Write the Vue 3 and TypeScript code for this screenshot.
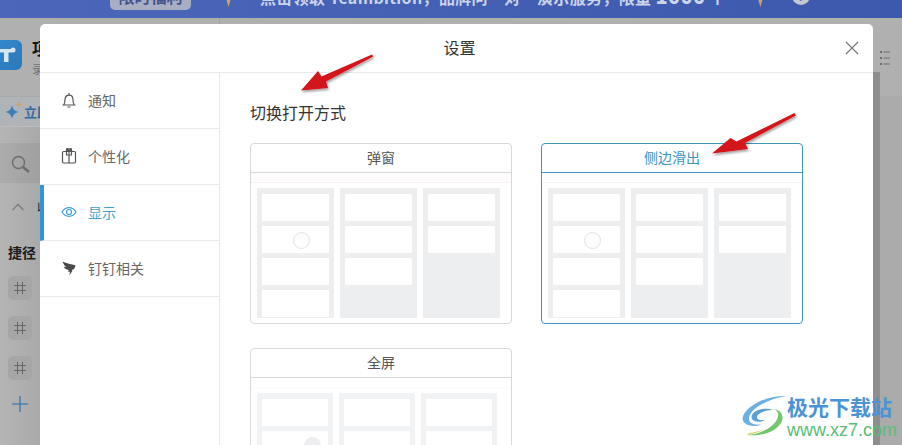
<script setup lang="ts">
const menu = [
  { key: 'bell', label: '通知', active: false },
  { key: 'gift', label: '个性化', active: false },
  { key: 'eye', label: '显示', active: true },
  { key: 'ding', label: '钉钉相关', active: false },
]
const cards = [
  { title: '弹窗', active: false, faded: false },
  { title: '侧边滑出', active: true, faded: false },
  { title: '全屏', active: false, faded: true },
]
const columns = [4, 3, 2]
const shortcuts = [1, 2, 3]
</script>

<template>
  <div class="page">
    <div class="topbar">
      <span class="promo-btn">限时福利</span>
      <span class="drop"></span>
      <span class="promo-text">点击领取 Teambition，品牌问一对一演示服务，限量 <b>1000</b> 个</span>
      <span class="drop drop-2"></span>
      <span class="help">?</span>
    </div>
    <div class="under">
      <aside class="side">
        <div class="project">
          <div class="logo">
            <svg width="22" height="30" viewBox="0 0 22 30">
              <path d="M0 9h12v3.500H8.500V22H4v-9.500H0z" fill="#d8e6f2"/>
              <circle cx="13" cy="10" r="2.500" fill="#d8e6f2"/>
            </svg>
          </div>
          <div class="project-text"><strong>项目</strong><small>录</small></div>
        </div>
        <div class="now">
          <svg width="20" height="24" viewBox="0 0 20 24">
            <path d="M8 5c.8 4 2.500 6 6.500 7-4 1-5.700 3-6.500 7-.8-4-2.500-6-6.500-7 4-1 5.700-3 6.500-7z" fill="#3a7fbc"/>
            <path d="M15 1c.4 2 1.200 3 3.200 3.500-2 .5-2.800 1.500-3.200 3.500-.4-2-1.200-3-3.200-3.500 2-.5 2.800-1.500 3.200-3.500z" fill="#c9a860"/>
          </svg>
          <span>立即</span>
        </div>
        <div class="search">
          <svg width="20" height="20" viewBox="0 0 20 20" fill="none" stroke="#6c6c6c" stroke-width="1.400">
            <circle cx="7.500" cy="7.500" r="6"/>
            <path d="M12 12l6 5" stroke-width="2.600"/>
          </svg>
        </div>
        <div class="collapse">
          <svg width="14" height="10" viewBox="0 0 14 10" fill="none" stroke="#7c7c7c" stroke-width="1.300"><path d="M1.500 8L7 2.500 12.500 8"/></svg>
          <span>收起</span>
        </div>
        <div class="shortcut">捷径</div>
        <div v-for="s in shortcuts" :key="s" class="hash">
          <svg width="14" height="14" viewBox="0 0 14 14" fill="none" stroke="#6a6a6a" stroke-width="1.100"><path d="M4.500 1v12M9.500 1v12M1 4.500h12M1 9.500h12"/></svg>
        </div>
        <div class="plus">
          <svg width="16" height="16" viewBox="0 0 16 16" fill="none" stroke="#4d7db0" stroke-width="1.600"><path d="M8 0v16M0 8h16"/></svg>
        </div>
      </aside>
      <div class="rest">
        <div class="rest-head">
          <svg class="list-icon" width="10" height="16" viewBox="0 0 10 16" fill="none" stroke="#6c6c6c" stroke-width="1.200">
            <path d="M3.500 2H10M3.500 8H10M3.500 14H10"/>
            <path d="M0 2h2M0 8h2M0 14h2" stroke-width="2"/>
          </svg>
        </div>
      </div>
    </div>

    <section class="modal">
      <header class="modal-head">
        <span>设置</span>
        <svg class="close" width="14" height="14" viewBox="0 0 14 14" fill="none" stroke="#7a7a7a" stroke-width="1.200"><path d="M1 1l12 12M13 1L1 13"/></svg>
      </header>
      <div class="modal-body">
        <nav class="nav">
          <div v-for="m in menu" :key="m.key" class="nav-item" :class="{ on: m.active }">
            <svg v-if="m.key === 'bell'" width="16" height="16" viewBox="0 0 16 16" fill="none" stroke="#555" stroke-width="1.200"><path d="M2.500 13h11c-1-1-1.500-2.300-1.500-5 0-2.800-1.600-4.800-4-4.800S4 5.200 4 8c0 2.700-.5 4-1.500 5zM8 3V1M6.500 15h3"/></svg>
            <svg v-else-if="m.key === 'gift'" width="16" height="17" viewBox="0 0 16 17" fill="none" stroke="#555" stroke-width="1.200"><rect x="1.500" y="4.500" width="13" height="11.500" rx="1.200"/><path d="M8 4.500V16M5.500 4.500v3.500h5V4.500"/><path d="M4.500 4.500L5.500 1h2l.5 2 .5-2h2l1 3.500z" fill="#555" stroke="none"/></svg>
            <svg v-else-if="m.key === 'eye'" width="16" height="16" viewBox="0 0 16 16" fill="none" stroke="#3f9fcb" stroke-width="1.200"><path d="M1 8c1.800-2.900 4-4.300 7-4.300S13.200 5.100 15 8c-1.800 2.900-4 4.300-7 4.300S2.800 10.900 1 8z"/><circle cx="8" cy="8" r="2.500"/></svg>
            <svg v-else width="16" height="16" viewBox="0 0 16 16" fill="#4a4a4a"><path d="M1.500 1.500c4 1.800 8.500 3 13 3.800-.3 1.800-1 3.200-2 4.300l-1.800.2.800 1-3.200 4.700.7-3.800H7l.8-1.700C5 9.500 3.300 8.200 2.800 6.700l2.400.3C3.500 5.800 2.200 3.700 1.500 1.500z"/></svg>
            <span>{{ m.label }}</span>
          </div>
        </nav>
        <main class="content">
          <h2>切换打开方式</h2>
          <div class="cards">
            <div v-for="c in cards" :key="c.title" class="card" :class="{ active: c.active, faded: c.faded }">
              <div class="card-title">{{ c.title }}</div>
              <div class="strip"></div>
              <div class="preview">
                <div v-for="(n, i) in columns" :key="i" class="col">
                  <div v-for="k in n" :key="k" class="tile">
                    <i v-if="i === 0 && k === 2" class="dot"></i>
                  </div>
                </div>
              </div>
            </div>
          </div>
        </main>
      </div>
    </section>
    <div class="scroll-edge"></div>

    <svg class="arrows" width="902" height="445" viewBox="0 0 902 445">
      <defs>
        <filter id="sh" x="-30%" y="-30%" width="160%" height="160%"><feDropShadow dx="1" dy="2" stdDeviation="1.300" flood-color="#000" flood-opacity=".35"/></filter>
      </defs>
      <g fill="#d3131a" filter="url(#sh)">
        <path d="M372 54.500l1.300 2L326 81.500l2 6.500-27 2.500 17-19.500 3.500 5.500z"/>
        <path d="M794.500 113l1.500 2.500-51 27.500 3 6-36 4.500 18.500-15.500 6 3.500z"/>
      </g>
    </svg>

    <div class="watermark">
      <svg width="45" height="41" viewBox="0 0 45 41" fill="none">
        <path d="M45 1C28 0 9 8 2 19c-4 7 1 12 10 12 3 0 5-.5 7-1.500-5 .5-11 0-12-5C6 15 24 4 45 1z" fill="#6bb0e2"/>
        <path d="M31 15c-8-3-18-.5-21 5-2 5 3 7.500 9 6.500 2-.3 3.500-1 4.500-2-3.500 1-8 1-8.500-2C14.500 18.500 23 15 31 15z" fill="#5c9fd8"/>
        <path d="M30 14c4 .5 7 3 6 7.500C34.500 30 21 39 5 40c9 1 26 0 34-12 4-7 0-14-9-14z" fill="#72c66b"/>
        <path d="M5 40c7-1 13-3 17-6-4 2-10 3.500-15 4z" fill="#d9d36a"/>
      </svg>
      <div class="wm-text">
        <div class="wm-cn">极光下载站</div>
        <div class="wm-url">www.xz7.com</div>
      </div>
    </div>
  </div>
</template>

<style>
html, body { margin: 0; padding: 0; overflow: hidden; }
</style>

<style scoped>
.page {
  position: relative;
  width: 902px;
  height: 445px;
  overflow: hidden;
  display: flex;
  flex-direction: column;
  background: #adadad;
  font-family: "Noto Sans CJK SC", "Liberation Sans", sans-serif;
}
.topbar {
  height: 18px;
  flex: none;
  background: linear-gradient(90deg, #4c67ba, #3c59ad);
  display: flex;
  align-items: flex-start;
  color: #cdd3ea;
  font-size: 16px;
  font-weight: 700;
  padding-left: 110px;
  box-sizing: border-box;
  overflow: hidden;
}
.promo-btn {
  width: 81px;
  height: 28px;
  margin-top: -18px;
  background: #a9aec4;
  border-radius: 5px;
  color: #44558f;
  text-align: center;
  line-height: 28px;
  flex: none;
}
.drop {
  width: 9px;
  height: 16px;
  margin: -9px 0 0 33px;
  background: #c9a56c;
  clip-path: polygon(0 0, 100% 0, 50% 100%);
  flex: none;
}
.promo-text {
  margin: -15px 0 0 27px;
  line-height: 22px;
  letter-spacing: .35px;
  white-space: nowrap;
  flex: none;
}
.promo-text b { font-size: 20px; }
.drop-2 { margin-left: 30px; }
.help {
  width: 18px;
  height: 18px;
  margin: -13px 0 0 27px;
  border-radius: 50%;
  background: #c5c8cf;
  color: #4a60b4;
  text-align: center;
  font-size: 12px;
  line-height: 18px;
  flex: none;
}
.under { flex: 1; display: flex; min-height: 0; }
.side {
  width: 220px;
  flex: none;
  background: linear-gradient(90deg, #b5b5b5, #a9a9a9 40px);
  border-right: 1px solid #a3a3a3;
  box-sizing: border-box;
}
.rest { flex: 1; background: #ababab; }
.rest-head { height: 78px; background: #b0b0b0; position: relative; }
.list-icon { position: absolute; right: 12px; top: 32px; }
.project {
  height: 79px;
  display: flex;
  gap: 10px;
  padding-top: 22px;
  box-sizing: border-box;
  border-bottom: 1px solid #a8a8a8;
  background: #b0b0b0;
}
.logo {
  width: 22px;
  height: 30px;
  background: linear-gradient(135deg, #3088cc, #2c77b8);
  border-radius: 0 6px 6px 0;
  overflow: hidden;
  flex: none;
}
.logo svg { display: block; }
.project-text { display: flex; flex-direction: column; }
.project-text strong { font-size: 17px; color: #151515; line-height: 20px; margin-top: -2px; white-space: nowrap; }
.project-text small { font-size: 12px; color: #707070; line-height: 20px; margin-top: 1px; }
.now {
  height: 30px;
  display: flex;
  align-items: center;
  gap: 0;
  background: #b0b3b8;
  color: #34689c;
  font-size: 13px;
  font-weight: 700;
  padding-left: 4px;
  box-sizing: border-box;
  border-bottom: 1px solid #bcbcbc;
  margin-bottom: 16px;
  white-space: nowrap;
}
.search {
  height: 40px;
  background: linear-gradient(90deg, #acacac, #9f9f9f 40px);
  padding: 12px 0 0 11px;
  box-sizing: border-box;
}
.collapse {
  height: 57px;
  padding-top: 19px;
  box-sizing: border-box;
  display: flex;
  align-items: flex-start;
  gap: 12px;
  padding-left: 11px;
  font-size: 13px;
  color: #222;
}
.collapse span { line-height: 14px; margin-top: -2px; white-space: nowrap; }
.shortcut {
  height: 24px;
  margin-left: 8px;
  font-size: 14px;
  font-weight: 700;
  color: #1d1d1d;
  line-height: 24px;
  margin-bottom: 12px;
}
.hash {
  width: 24px;
  height: 24px;
  margin: 0 0 16px 8px;
  border-radius: 5px;
  background: #a6a6a6;
  display: flex;
  align-items: center;
  justify-content: center;
}
.plus { margin-left: 12px; margin-top: 4px; }
.plus svg { display: block; }

.modal {
  position: absolute;
  left: 40px;
  top: 24px;
  width: 833px;
  height: 421px;
  background: #fff;
  border-radius: 5px 5px 0 0;
  display: flex;
  flex-direction: column;
}
.modal-head {
  height: 49px;
  flex: none;
  border-bottom: 1px solid #e8e8e8;
  display: flex;
  align-items: center;
  justify-content: center;
  position: relative;
  font-size: 16px;
  color: #333;
  padding: 0 0 2px 6px;
  box-sizing: border-box;
}
.close { position: absolute; right: 14px; top: 17px; }
.modal-body { flex: 1; display: flex; min-height: 0; }
.nav { width: 180px; flex: none; border-right: 1px solid #e8e8e8; box-sizing: border-box; }
.nav-item {
  height: 56px;
  border-bottom: 1px solid #e8e8e8;
  display: flex;
  align-items: center;
  gap: 11px;
  padding: 0 0 2px 21px;
  box-sizing: border-box;
  font-size: 14px;
  color: #666;
}
.nav-item.on { color: #3f9fcb; border-left: 4px solid #2f96dc; padding-left: 17px; }
.content { flex: 1; padding: 28px 0 0 30px; min-width: 0; overflow: hidden; }
h2 { margin: 0 0 20px; font-size: 16px; font-weight: 400; line-height: 22px; color: #333; }
.cards { display: grid; grid-template-columns: 262px 262px; column-gap: 29px; row-gap: 24px; }
.card {
  height: 181px;
  border: 1px solid #d8d8d8;
  border-radius: 4px;
  box-sizing: border-box;
  overflow: hidden;
}
.card.faded { height: 200px; }
.card.active { border-color: #3f96b8; }
.card-title {
  height: 29px;
  box-sizing: border-box;
  border-bottom: 1px solid #d8d8d8;
  text-align: center;
  font-size: 14px;
  line-height: 26px;
  color: #555;
}
.active .card-title { color: #3a94bd; border-color: #3f96b8; }
.strip { height: 10px; box-sizing: border-box; background: #fdfbfb; border-bottom: 1px solid #f4f2f2; }
.active .strip { background: #fff; }
.faded .strip { background: #fff; border-color: #fafafa; }
.preview { display: flex; gap: 6px; margin: 5px 0 0 6px; }
.faded .preview { opacity: .75; }
.col {
  width: 77px;
  height: 130px;
  box-sizing: border-box;
  background: #edeef0;
  padding: 6px 5px 0;
  display: flex;
  flex-direction: column;
  gap: 5px;
}
.faded .col { width: 76px; }
.tile { height: 27px; background: #fff; flex: none; display: flex; align-items: center; justify-content: center; }
.dot {
  width: 17px;
  height: 17px;
  border-radius: 50%;
  border: 1px solid #e2e2e2;
  background: #fdfdfd;
  box-sizing: border-box;
  margin: 1px 0 0 12px;
}
.faded .dot { margin-left: 34px; background: #e9e9ec; border-color: #e9e9ec; }
.scroll-edge { position: absolute; left: 873px; top: 72px; width: 7px; height: 373px; background: #8e8e8e; }
.arrows { position: absolute; left: 0; top: 0; pointer-events: none; }
.watermark { position: absolute; left: 742px; top: 395px; display: flex; gap: 0; }
.wm-text { margin-top: -2px; }
.wm-cn { font-size: 21px; line-height: 27px; font-weight: 700; color: #4a93d6; white-space: nowrap; }
.wm-url { font-size: 18px; line-height: 16px; margin-top: 2px; color: #58bd76; font-family: "Liberation Sans", sans-serif; white-space: nowrap; }
</style>
